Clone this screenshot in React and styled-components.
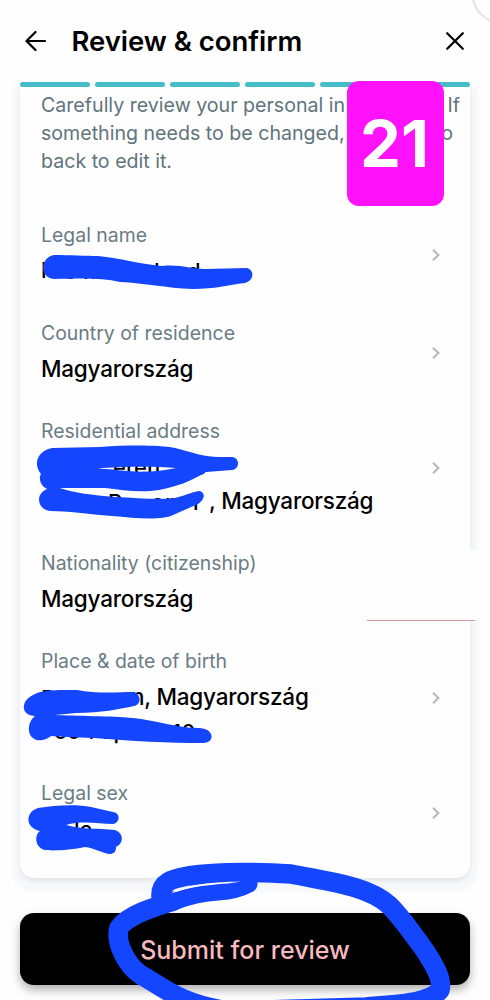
import React from "react";
import styled, { createGlobalStyle } from "styled-components";

const GlobalStyle = createGlobalStyle`
  * {
    box-sizing: border-box;
  }
  body {
    margin: 0;
    background: #fefefe;
    font-family: Inter, "Liberation Sans", sans-serif;
  }
`;

const rows = [
  { label: "Legal name", lines: [""], arrow: true },
  { label: "Country of residence", lines: ["Magyarország"], arrow: true },
  {
    label: "Residential address",
    lines: ["", ", Magyarország"],
    indents: [0, 168],
    arrow: true,
  },
  { label: "Nationality (citizenship)", lines: ["Magyarország"] },
  {
    label: "Place & date of birth",
    lines: ["n, Magyarország", ""],
    indents: [90, 0],
    arrow: true,
  },
  { label: "Legal sex", lines: [""], arrow: true },
];

// bits of letters that stick out from under the marker
const remnants = [
  { x: 41, y: 278, text: "l" },
  { x: 64, y: 279, text: "o" },
  { x: 83, y: 279, text: "n" },
  { x: 154, y: 279, text: "l" },
  { x: 187, y: 279, text: "d" },
  { x: 113, y: 475, text: "eren" },
  { x: 194, y: 475, text: "s" },
  { x: 85, y: 510, text: "o" },
  { x: 108, y: 510, text: "P" },
  { x: 125, y: 510, text: "o" },
  { x: 151, y: 510, text: "o" },
  { x: 165, y: 510, text: "n" },
  { x: 193, y: 510, text: "r" },
  { x: 41, y: 706, text: "P" },
  { x: 71, y: 706, text: "l" },
  { x: 54, y: 739, text: "oo" },
  { x: 88, y: 739, text: "." },
  { x: 101, y: 739, text: "ap" },
  { x: 129, y: 739, text: "r" },
  { x: 172, y: 740, text: "10" },
  { x: 74, y: 837, text: "le" },
];

function App() {
  return (
    <Page>
      <GlobalStyle />
      <Corner />
      <Header>
        <BackIcon viewBox="0 0 22 22">
          <path d="M20 11H2M10.5 2L1.5 11l9 9" />
        </BackIcon>
        <Title>Review & confirm</Title>
        <CloseIcon viewBox="0 0 18 18">
          <path d="M1.2 1.2l15.6 15.6M16.8 1.2L1.2 16.8" />
        </CloseIcon>
      </Header>
      <Progress>
        {[1, 2, 3, 4, 5, 6].map((i) => (
          <Step key={i} />
        ))}
      </Progress>
      <Card>
        <Intro>
          <span>Carefully review your personal in</span>
          <Tail>If</Tail>
          <span>something needs to be changed,</span>
          <Tail $right={7}>o</Tail>
          <span>back to edit it.</span>
        </Intro>
        <Rows>
          {rows.map((row) => (
            <Row key={row.label}>
              <div>
                <Label>{row.label}</Label>
                {row.lines.map((line, i) => (
                  <Value key={i} $indent={row.indents ? row.indents[i] : 0}>
                    {line}
                  </Value>
                ))}
              </div>
              {row.arrow && (
                <Chevron viewBox="0 0 10 14">
                  <path d="M2 1.8L7.4 7 2 12.2" />
                </Chevron>
              )}
            </Row>
          ))}
        </Rows>
      </Card>
      <Submit>Submit for review</Submit>
      <Patch />
      <Badge>21</Badge>
      <Marker viewBox="0 0 490 1000">
        <g fill="#000" fontSize="22" fontWeight="500">
          {remnants.map((r, i) => (
            <text key={i} x={r.x} y={r.y}>
              {r.text}
            </text>
          ))}
        </g>
        <g fill="#1546ff">
          <path d="M54 255C70 255 86 256 98 256C120 258 145 265 162 266C180 264 190 269 205 269L247 268C255 270 254 281 245 283C228 285 215 289 193 289C165 288 145 283 120 282C100 277 75 279 54 279C40 278 39 258 54 255Z" />
          <path
            fillRule="evenodd"
            d="M52 448L100 447C130 445 158 445 175 448C194 453 205 457 219 457L232 457C240 458 240 469 232 470L206 472C190 482 175 487 159 490C140 493 122 490 105 488L60 488C74 493 92 495 115 497C138 498 160 500 175 498C187 495 194 491 200 491C207 494 203 501 198 504L173 515C160 521 135 518 112 516C87 514 68 511 50 511C37 509 35 494 47 489C39 485 39 477 41 474C34 466 35 452 52 448ZM98 468.500C120 466.500 154 466 176 468C158 472 138 473 113 469.500Z"
          />
          <path d="M33 695C43 689 60 690 77 690C97 694 119 692 134 692C142 695 141 705 134 706C120 709 101 713 76 713L55 715C75 716 112 716 133 718C155 720 176 728 199 728C214 728 216 743 203 743C170 743 130 741 94 738C75 737 60 737 51 736C41 744 30 740 29 731C28 724 32 718 35 716C21 716 20 701 33 695Z" />
          <path d="M38 808C54 805 78 804 91 807L113 812C121 813 120 823 113 824C99 824 83 820 66 825C83 830 97 828 115 830C125 834 123 844 116 847C116 852 114 854 109 854C100 852 94 848 85 847C72 850 53 851 45 850C35 848 34 835 40 831C25 828 25 812 38 808Z" />
        </g>
        <g fill="none" stroke="#1546ff" strokeLinecap="round" strokeLinejoin="round">
          <path
            strokeWidth="19.5"
            d="M161 897C160 881 173 879 188 876C219 871 257 872 291 874C331 882 368 886 389 905C402 918 409 929 421 945C433 962 443 979 440 990C430 1003 400 1004 366 1007L230 1011C180 1005 160 985 141 975C126 965 115 942 119 928C128 914 161 905 174 901"
          />
          <path
            strokeWidth="17"
            d="M120 928C128 914 161 906 176 901C192 895 203 893 218 892C232 891 240 889 249 884"
          />
        </g>
        <path fill="#f8f9fb" d="M171 893.500C181 886 208 882 241 881.500C226 885 200 883 171 893.500Z" />
      </Marker>
    </Page>
  );
}

const Page = styled.div`
  position: relative;
  display: flex;
  flex-direction: column;
  width: 490px;
  height: 1000px;
  padding: 0 20px;
  overflow: hidden;
  background: #fefefe;
`;
const Corner = styled.div`
  position: absolute;
  top: -33px;
  left: 472px;
  width: 56px;
  height: 56px;
  border: 2px solid #e4e4e5;
  border-radius: 50%;
`;
const Header = styled.header`
  display: flex;
  align-items: center;
  height: 82px;
  padding: 0 5px;
`;
const BackIcon = styled.svg`
  width: 22px;
  height: 22px;
  fill: none;
  stroke: #000;
  stroke-width: 2.2;
  stroke-linecap: round;
  stroke-linejoin: round;
`;
const CloseIcon = styled(BackIcon)`
  width: 18px;
  height: 18px;
  margin-left: auto;
  margin-right: 1px;
`;
const Title = styled.h1`
  margin: 0 0 0 24.5px;
  font-size: 27.5px;
  line-height: 36px;
  font-weight: 600;
  letter-spacing: -0.04px;
  white-space: nowrap;
`;
const Progress = styled.div`
  position: relative;
  display: flex;
  gap: 5px;
  height: 5px;
  flex-shrink: 0;
`;
const Step = styled.div`
  flex: 0 0 70px;
  border-radius: 3px;
  background: #45bdc9;
  &:last-child {
    flex: 1;
  }
`;
const Card = styled.main`
  flex-shrink: 0;
  height: 791px;
  padding: 4px 20px 0 21px;
  background: #fefefe;
  border-radius: 0 0 14px 14px;
  box-shadow: 0 3px 4px rgba(60, 65, 80, 0.1), 0 6px 3px 8px #f7f8fb;
  clip-path: inset(0 -10px -20px -8px);
`;
const Intro = styled.div`
  display: grid;
  grid-template-columns: 1fr auto;
  height: 84px;
  margin-right: -10px;
  color: #61747c;
  font-size: 19.6px;
  line-height: 28px;
  white-space: nowrap;
`;
const Tail = styled.span`
  justify-self: end;
  padding-right: ${(p) => p.$right || 0}px;
`;
const Rows = styled.div`
  display: flex;
  flex-direction: column;
  gap: 31px;
  margin-top: 46px;
`;
const Row = styled.div`
  display: flex;
  align-items: center;
  justify-content: space-between;
`;
const Label = styled.div`
  margin-bottom: 5px;
  color: #6a7c84;
  font-size: 19.45px;
  line-height: 28px;
`;
const Value = styled.div`
  height: 34px;
  padding-left: ${(p) => p.$indent}px;
  color: #000;
  font-size: 22.5px;
  line-height: 34px;
  font-weight: 500;
  letter-spacing: -0.22px;
  white-space: nowrap;
`;
const Chevron = styled.svg`
  width: 10px;
  height: 14px;
  margin-right: 9px;
  fill: none;
  stroke: #b5babd;
  stroke-width: 2.1;
`;
const Submit = styled.button`
  flex-shrink: 0;
  height: 72px;
  margin-top: 35px;
  padding: 2px 0 0;
  border: 0;
  border-radius: 14px;
  background: #000;
  color: #f7b9bd;
  font-family: inherit;
  font-size: 25px;
  font-weight: 500;
  box-shadow: 0 5px 10px rgba(0, 0, 0, 0.3);
`;
const Patch = styled.div`
  position: absolute;
  top: 551px;
  left: 367px;
  width: 108px;
  height: 70px;
  background: #fefefe;
  border-bottom: 1px solid #dc9399;
  box-shadow: 8px -1px 0 #fefefe;
`;
const Badge = styled.div`
  position: absolute;
  top: 81px;
  left: 347px;
  display: flex;
  align-items: center;
  justify-content: center;
  width: 97px;
  height: 125px;
  padding-right: 2px;
  border-radius: 12px;
  background: #ff12fa;
  color: #fff;
  font-family: Inter, sans-serif;
  font-size: 65px;
  font-weight: 700;
  letter-spacing: 0;
`;
const Marker = styled.svg`
  position: absolute;
  top: 0;
  left: 0;
  width: 490px;
  height: 1000px;
  pointer-events: none;
`;

export default App;
